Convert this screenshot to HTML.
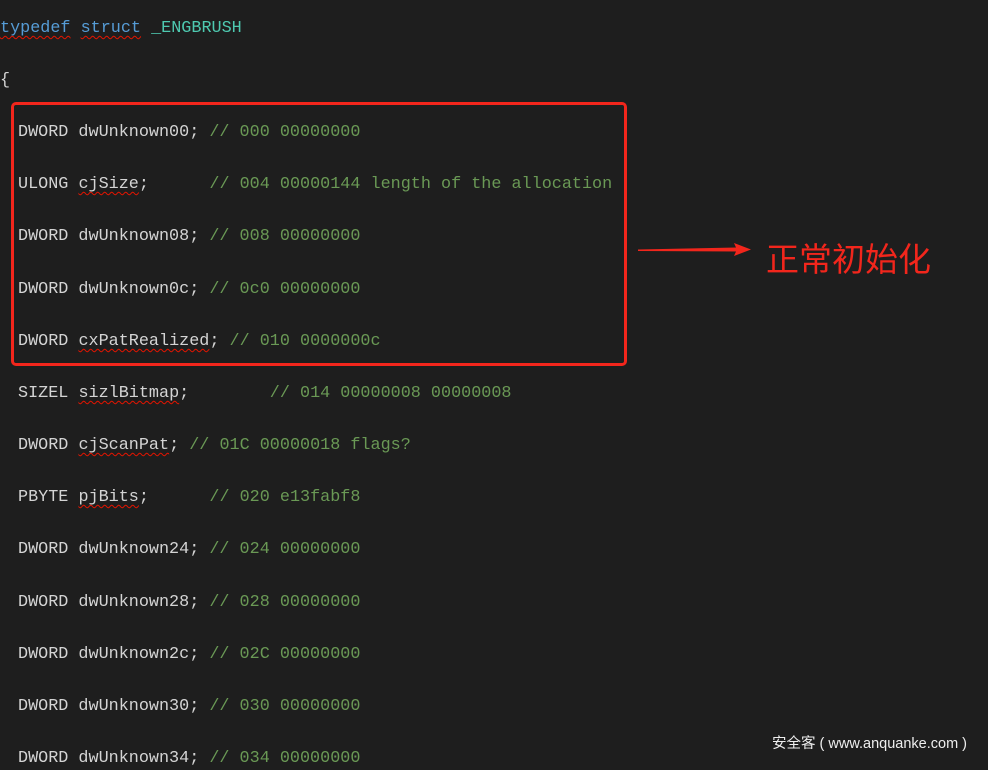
<!DOCTYPE html>
<html><head><meta charset="utf-8"><style>
html,body{margin:0;padding:0;background:#1e1e1e;width:988px;height:761px;overflow:hidden}
.l{position:absolute;left:18px;height:22px;line-height:22px;font-family:"Liberation Mono",monospace;font-size:16.8px;color:#d4d4d4;white-space:pre}
.k{color:#569cd6}.t{color:#4ec9b0}.c{color:#6a9955}
.s{text-decoration:underline wavy #e51400;text-decoration-thickness:1px;text-underline-offset:3px}
.box{position:absolute;left:11px;top:102px;width:610px;height:258px;border:3px solid #f2261c;border-radius:5px}
.cn{position:absolute;left:766px;top:237px;font-family:"Noto Sans CJK SC",sans-serif;font-size:33px;line-height:40px;color:#f2261c}
.wm{position:absolute;left:772px;top:732px;font-family:"Liberation Sans","Noto Sans CJK SC",sans-serif;font-size:14.5px;color:#eee;white-space:pre}
</style></head><body>
<div class="l" style="left:0;top:18px"><span class="k s">typedef</span> <span class="k s">struct</span> <span class="t">_ENGBRUSH</span></div>
<div class="l" style="left:0;top:70px">{</div>
<div class="l" style="top:122px">DWORD dwUnknown00; <span class="c">// 000 00000000</span></div>
<div class="l" style="top:174px">ULONG <span class="s">cjSize</span>;      <span class="c">// 004 00000144 length of the allocation</span></div>
<div class="l" style="top:226px">DWORD dwUnknown08; <span class="c">// 008 00000000</span></div>
<div class="l" style="top:279px">DWORD dwUnknown0c; <span class="c">// 0c0 00000000</span></div>
<div class="l" style="top:331px">DWORD <span class="s">cxPatRealized</span>; <span class="c">// 010 0000000c</span></div>
<div class="l" style="top:383px">SIZEL <span class="s">sizlBitmap</span>;        <span class="c">// 014 00000008 00000008</span></div>
<div class="l" style="top:435px">DWORD <span class="s">cjScanPat</span>; <span class="c">// 01C 00000018 flags?</span></div>
<div class="l" style="top:487px">PBYTE <span class="s">pjBits</span>;      <span class="c">// 020 e13fabf8</span></div>
<div class="l" style="top:539px">DWORD dwUnknown24; <span class="c">// 024 00000000</span></div>
<div class="l" style="top:592px">DWORD dwUnknown28; <span class="c">// 028 00000000</span></div>
<div class="l" style="top:644px">DWORD dwUnknown2c; <span class="c">// 02C 00000000</span></div>
<div class="l" style="top:696px">DWORD dwUnknown30; <span class="c">// 030 00000000</span></div>
<div class="l" style="top:748px">DWORD dwUnknown34; <span class="c">// 034 00000000</span></div>
<div class="box"></div>
<svg style="position:absolute;left:636px;top:240px" width="120" height="20"><polygon points="2,9.5 100,7.5 98,3 115,9.5 98,16 100,11.5 2,11" fill="#f2261c"/></svg>
<div class="cn">正常初始化</div>
<div class="wm">安全客 ( www.anquanke.com )</div>
</body></html>
